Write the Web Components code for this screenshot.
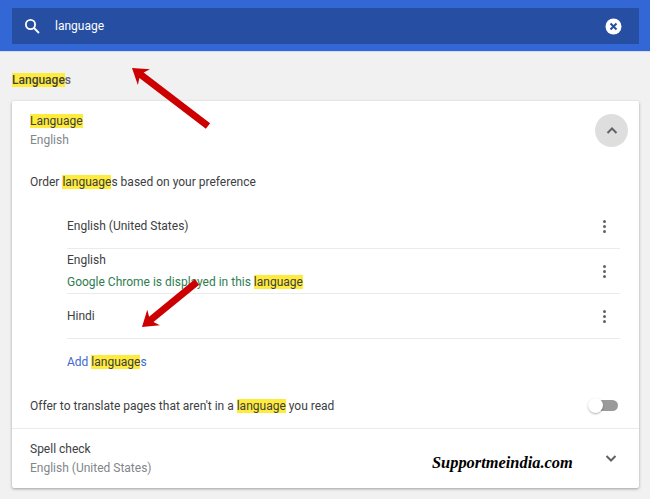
<!DOCTYPE html>
<html>
<head>
<meta charset="utf-8">
<title>Languages</title>
<style>
    html, body { margin: 0; padding: 0; }
    body { width: 650px; height: 499px; overflow: hidden; background: #f1f1f1; font-family: Roboto, "Liberation Sans", sans-serif; font-size: 12px; color: #3c4043; }
</style>
</head>
<body>
<settings-page>
    <search-bar slot="top" value="language"></search-bar>

    <section-title><hl-text>Language</hl-text>s</section-title>

    <settings-card>
        <card-head expanded>
            <span slot="title"><hl-text>Language</hl-text></span>
            <span slot="sub">English</span>
        </card-head>

        <plain-row height="44" pad="2"><span>Order <hl-text>language</hl-text>s based on your preference</span></plain-row>

        <lang-list>
            <lang-row><span>English (United States)</span></lang-row>
            <lang-row>
                <span>English</span>
                <span slot="note">Google Chrome is displayed in this <hl-text>language</hl-text></span>
            </lang-row>
            <lang-row><span>Hindi</span></lang-row>
            <add-link>Add <hl-text>language</hl-text>s</add-link>
        </lang-list>

        <plain-row height="45" pad="0">
            <span>Offer to translate pages that aren't in a <hl-text>language</hl-text> you read</span>
            <toggle-switch slot="end"></toggle-switch>
        </plain-row>

        <card-head divider>
            <span slot="title">Spell check</span>
            <span slot="sub">English (United States)</span>
        </card-head>
    </settings-card>

    <red-arrow tip-x="132" tip-y="68" tail-x="208" tail-y="126"></red-arrow>
    <red-arrow tip-x="142" tip-y="327" tail-x="197" tail-y="282"></red-arrow>
    <water-mark>Supportmeindia.com</water-mark>
</settings-page>

<script>
class SettingsPage extends HTMLElement {
    constructor() {
        super();
        this.attachShadow({ mode: 'open' }).innerHTML = `
            <style>
                :host { display: block; position: relative; width: 650px; height: 499px; }
                .main { padding: 0 11px 0 12px; }
            </style>
            <slot name="top"></slot>
            <div class="main"><slot></slot></div>
        `;
    }
}

class SearchBar extends HTMLElement {
    constructor() {
        super();
        this.attachShadow({ mode: 'open' }).innerHTML = `
            <style>
                :host { display: block; height: 43px; padding: 8px 11px 0 12px; background: #3367d6; border-bottom: 1px solid #cfdcf3; }
                .box { display: flex; align-items: center; height: 36px; background: #264fa3; color: #fff; font-size: 12px; }
                .glass { width: 16px; height: 16px; margin-left: 12px; flex: none; }
                .val { flex: 1; margin-left: 15px; }
                .clear { width: 17px; height: 17px; margin-right: 17px; flex: none; }
            </style>
            <div class="box">
                <svg class="glass" viewBox="0 0 16 16" fill="none" stroke="#fff" stroke-width="1.8">
                    <circle cx="6.5" cy="6.5" r="4.6"/><path d="M10 10l5 5"/>
                </svg>
                <span class="val">${this.getAttribute('value')}</span>
                <svg class="clear" viewBox="0 0 17 17">
                    <circle cx="8.5" cy="8.5" r="8" fill="#fff"/>
                    <path d="M5.5 5.5l6 6M11.5 5.5l-6 6" stroke="#264fa3" stroke-width="2"/>
                </svg>
            </div>
        `;
    }
}

class SectionTitle extends HTMLElement {
    constructor() {
        super();
        this.attachShadow({ mode: 'open' }).innerHTML = `
            <style>
                :host { display: flex; align-items: center; height: 49px; padding-top: 7px; box-sizing: border-box; color: #5f6368; font-weight: 500; }
            </style>
            <span><slot></slot></span>
        `;
    }
}

class SettingsCard extends HTMLElement {
    constructor() {
        super();
        this.attachShadow({ mode: 'open' }).innerHTML = `
            <style>
                :host { display: block; background: #fff; border-radius: 2px; box-shadow: 0 1px 3px rgba(0,0,0,.35); }
            </style>
            <slot></slot>
        `;
    }
}

class CardHead extends HTMLElement {
    constructor() {
        super();
        const up = this.hasAttribute('expanded');
        this.attachShadow({ mode: 'open' }).innerHTML = `
            <style>
                :host { display: flex; height: 58px; padding: 11px 11px 0 18px; box-sizing: border-box; }
                :host([divider]) { height: 60px; border-top: 1px solid #ebebeb; padding-right: 21px; }
                .text { flex: 1; line-height: 19px; }
                .sub { color: #80868b; display: block; }
                .btn { display: flex; align-items: center; justify-content: center; width: 33px; height: 33px; margin-top: 2px; border-radius: 50%; }
                .up { background: #dedede; }
                svg { width: 14px; height: 9px; }
                :host([divider]) .btn { width: 14px; }
            </style>
            <div class="text">
                <slot name="title"></slot>
                <span class="sub"><slot name="sub"></slot></span>
            </div>
            <div class="btn ${up ? 'up' : ''}">
                <svg viewBox="0 0 14 9" fill="none" stroke="#5f6368" stroke-width="2">
                    <path d="${up ? 'M2.5 7L7 2.5 11.5 7' : 'M2.5 2L7 6.5 11.5 2'}"/>
                </svg>
            </div>
        `;
    }
}

class PlainRow extends HTMLElement {
    constructor() {
        super();
        this.attachShadow({ mode: 'open' }).innerHTML = `
            <style>
                :host { display: flex; align-items: center; justify-content: space-between; height: ${this.getAttribute('height')}px; padding: ${this.getAttribute('pad')}px 21px 0 18px; box-sizing: border-box; }
            </style>
            <slot></slot>
            <slot name="end"></slot>
        `;
    }
}

class LangList extends HTMLElement {
    constructor() {
        super();
        this.attachShadow({ mode: 'open' }).innerHTML = `
            <style>
                :host { display: block; padding: 1px 19px 0 55px; }
            </style>
            <slot></slot>
        `;
    }
}

class LangRow extends HTMLElement {
    constructor() {
        super();
        this.attachShadow({ mode: 'open' }).innerHTML = `
            <style>
                :host { display: flex; align-items: center; height: 45px; box-sizing: border-box; border-bottom: 1px solid #ebebeb; }
                .text { flex: 1; line-height: 22px; }
                .note { display: block; color: #2f7d4f; }
                .dots { display: flex; flex-direction: column; gap: 2px; margin-right: 14px; }
                .dots i { width: 3px; height: 3px; border-radius: 50%; background: #5f6368; }
            </style>
            <div class="text">
                <slot></slot>
                <span class="note"><slot name="note"></slot></span>
            </div>
            <div class="dots"><i></i><i></i><i></i></div>
        `;
    }
}

class AddLink extends HTMLElement {
    constructor() {
        super();
        this.attachShadow({ mode: 'open' }).innerHTML = `
            <style>
                :host { display: flex; align-items: center; height: 44px; padding-top: 2px; box-sizing: border-box; color: #4267d2; }
            </style>
            <span><slot></slot></span>
        `;
    }
}

class HlText extends HTMLElement {
    constructor() {
        super();
        // no whitespace round the slot: it would show up as a gap in running text
        this.attachShadow({ mode: 'open' }).innerHTML =
            '<style>:host { display: inline; background: #ffeb3b; color: #3c4043; }</style><slot></slot>';
    }
}

class ToggleSwitch extends HTMLElement {
    constructor() {
        super();
        this.attachShadow({ mode: 'open' }).innerHTML = `
            <style>
                :host { display: block; position: relative; width: 29px; height: 11px; background: #9a9a9a; border-radius: 6px; }
                i { position: absolute; left: -1px; top: -2px; width: 15px; height: 15px; border-radius: 50%; background: #fff; box-shadow: 0 1px 2px rgba(0,0,0,.3); }
            </style>
            <i></i>
        `;
    }
}

class RedArrow extends HTMLElement {
    connectedCallback() {
        const [tx, ty, ex, ey] = ['tip-x', 'tip-y', 'tail-x', 'tail-y'].map(a => +this.getAttribute(a));
        const len = Math.hypot(ex - tx, ey - ty);
        const ux = (ex - tx) / len, uy = (ey - ty) / len;
        const pt = (along, side) => `${tx + ux * along - uy * side},${ty + uy * along + ux * side}`;
        this.attachShadow({ mode: 'open' }).innerHTML = `
            <style>
                :host { display: block; position: absolute; left: 0; top: 0; pointer-events: none; }
                svg { display: block; }
            </style>
            <svg width="650" height="499">
                <polygon fill="#cc0000" points="${pt(0, 0)} ${pt(15, 10)} ${pt(12, 3.5)} ${pt(len, 3.5)} ${pt(len, -3.5)} ${pt(12, -3.5)} ${pt(15, -10)}"/>
            </svg>
        `;
    }
}

class WaterMark extends HTMLElement {
    constructor() {
        super();
        this.attachShadow({ mode: 'open' }).innerHTML = `
            <style>
                :host { display: block; position: absolute; left: 432px; top: 453px; font: italic bold 16.4px "Liberation Serif", serif; color: #000; white-space: nowrap; }
            </style>
            <slot></slot>
        `;
    }
}

customElements.define('settings-page', SettingsPage);
customElements.define('search-bar', SearchBar);
customElements.define('section-title', SectionTitle);
customElements.define('settings-card', SettingsCard);
customElements.define('card-head', CardHead);
customElements.define('plain-row', PlainRow);
customElements.define('lang-list', LangList);
customElements.define('lang-row', LangRow);
customElements.define('add-link', AddLink);
customElements.define('hl-text', HlText);
customElements.define('toggle-switch', ToggleSwitch);
customElements.define('red-arrow', RedArrow);
customElements.define('water-mark', WaterMark);
</script>
</body>
</html>
